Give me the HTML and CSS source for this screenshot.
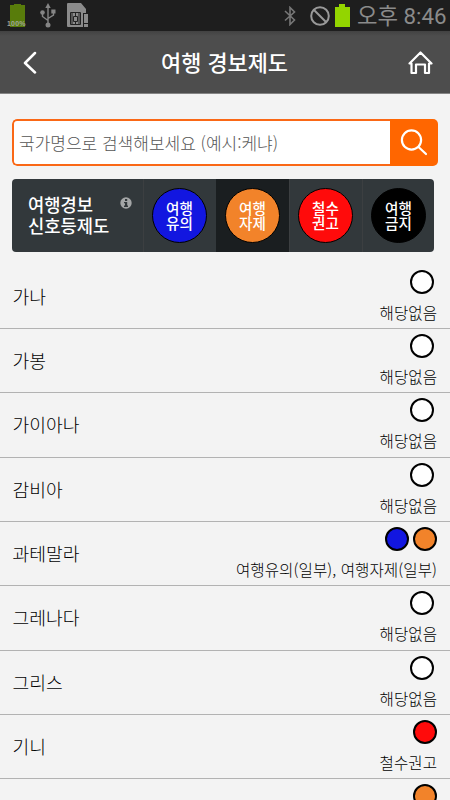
FILE: index.html
```html
<!DOCTYPE html>
<html lang="ko">
<head>
<meta charset="utf-8">
<title>여행 경보제도</title>
<link rel="stylesheet" href="styles.css">
</head>
<body>
<div class="statusbar">
  <div class="battery-full"><svg width="18" height="24" viewBox="0 0 18 24"><path fill="#587c0b" d="M1 2h4V1h7v1h4v22H1z"/></svg><span class="percent">100%</span></div>
  <svg class="usb" width="16" height="25" viewBox="0 0 16 25" fill="none" stroke="#858585" stroke-width="1.4"><path d="M8 3v18M2.500 9v4.500L8 17.500M13.500 7v5L8 15.500"/><g fill="#858585" stroke="none"><path d="M8 0l2.700 5H5.300zM11.300 6.500h4.200v4h-4.200z"/><circle cx="2.500" cy="9.500" r="2.300"/><circle cx="8" cy="22" r="2.500"/></g></svg>
  <svg class="sim" width="22" height="25" viewBox="0 0 22 25"><path fill="#8b8b8b" d="M1 0h13l5 6v4h-3v14H1q-1 0-1-1V1q0-1 1-1zM17 11h4v9h-4zM17 21h4v3h-4z"/><path fill="none" stroke="#222" d="M3.500 9.500h10v12h-10zM6.500 13.500h4v5h-4zM5 10v11M12 10v11M8.500 10v3M8.500 18v3"/></svg>
  <div class="spacer"></div>
  <svg class="bluetooth" width="12" height="20" viewBox="0 0 12 20" fill="none" stroke="#777" stroke-width="1.600"><path d="M1 5l9.500 9L6 18.500v-17L10.500 6 1 14.500"/></svg>
  <svg class="blocked" width="20" height="20" viewBox="0 0 20 20" fill="none" stroke="#999" stroke-width="2"><circle cx="10" cy="10" r="8.800"/><path d="M4 4l12 12"/></svg>
  <svg class="battery" width="15" height="23" viewBox="0 0 15 23"><path fill="#93d500" d="M0 3h4V0h6v3h5v20H0z"/></svg>
  <span class="clock">오후 8:46</span>
</div>
<header class="header">
  <svg class="back" width="14" height="24" viewBox="0 0 14 24" fill="none" stroke="#fff" stroke-width="2.500" stroke-linecap="round" stroke-linejoin="round"><path d="M12 3L2 13l10 9.500"/></svg>
  <h1 class="title">여행 경보제도</h1>
  <svg class="home" width="26" height="26" viewBox="0 0 26 26" fill="none" stroke="#fff" stroke-width="2.200" stroke-linecap="round" stroke-linejoin="round"><path d="M4.500 14.500H2.500L13.500 3.500l11 11h-2.500v9.500h-4v-8.500H9v8.500H4.500z"/></svg>
</header>
<main>
  <form class="search">
    <div class="field">국가명으로 검색해보세요 (예시:케냐)</div>
    <div class="submit"><svg width="28" height="28" viewBox="0 0 28 28" fill="none" stroke="#fff" stroke-width="2.200" stroke-linecap="round"><circle cx="11.500" cy="11" r="9.600"/><path d="M18.500 18l7.500 7"/></svg></div>
  </form>
  <section class="legend">
    <div class="label"><span>여행경보<br>신호등제도</span><svg class="info" width="12" height="12" viewBox="0 0 12 12"><circle cx="6" cy="6" r="5.700" fill="#a4a6a7"/><path fill="#32383b" d="M5 2h2.200v2H5zM4 5h3.200v3.500H8V10H4V8.500h1V6.300H4z"/></svg></div>
    <div class="level"><div class="disc blue">여행<br>유의</div></div>
    <div class="level active"><div class="disc orange">여행<br>자제</div></div>
    <div class="level"><div class="disc red">철수<br>권고</div></div>
    <div class="level last"><div class="disc black">여행<br>금지</div></div>
  </section>
  <ul class="list">
    <li class="row"><span class="country">가나</span><div class="state"><div class="dots none"><i class="dot"></i></div><span>해당없음</span></div></li>
    <li class="row"><span class="country">가봉</span><div class="state"><div class="dots none"><i class="dot"></i></div><span>해당없음</span></div></li>
    <li class="row"><span class="country">가이아나</span><div class="state"><div class="dots none"><i class="dot"></i></div><span>해당없음</span></div></li>
    <li class="row"><span class="country">감비아</span><div class="state"><div class="dots none"><i class="dot"></i></div><span>해당없음</span></div></li>
    <li class="row"><span class="country">과테말라</span><div class="state"><div class="dots"><i class="dot blue"></i><i class="dot orange"></i></div><span class="wide">여행유의(일부), 여행자제(일부)</span></div></li>
    <li class="row"><span class="country">그레나다</span><div class="state"><div class="dots none"><i class="dot"></i></div><span>해당없음</span></div></li>
    <li class="row"><span class="country">그리스</span><div class="state"><div class="dots none"><i class="dot"></i></div><span>해당없음</span></div></li>
    <li class="row"><span class="country">기니</span><div class="state"><div class="dots"><i class="dot red"></i></div><span>철수권고</span></div></li>
    <li class="row"><span class="country"></span><div class="state"><div class="dots"><i class="dot orange"></i></div></div></li>
  </ul>
</main>
</body>
</html>
```
FILE: styles.css
```css
* { box-sizing: border-box; }
html { height: 800px; overflow: hidden; }
body {
  display: flex;
  flex-direction: column;
  margin: 0;
  width: 450px;
  height: 800px;
  overflow: hidden;
  background: #f3f3f3;
  color: #000;
  font-family: "Noto Sans CJK KR", sans-serif;
}
svg { display: block; flex: none; }
.statusbar {
  display: flex;
  flex: none;
  align-items: flex-start;
  height: 31px;
  padding: 3px 5px 0 9px;
  background: #1e1e1e;
}
.battery-full { position: relative; width: 18px; }
.percent {
  position: absolute;
  left: -2px;
  top: 17px;
  font: bold 7px/8px "Liberation Sans", sans-serif;
  letter-spacing: .2px;
  color: #a0a59a;
}
.usb { margin-left: 13px; }
.sim { margin-left: 11px; }
.spacer { flex: 1; }
.bluetooth { margin: 3px 14px 0 0; }
.blocked { margin: 3px 5px 0 0; }
.battery { margin: 1px 7px 0 0; }
.clock {
  width: 88px;
  font: 22.300px/26px Roboto, "Noto Sans CJK KR", sans-serif;
  color: #8b8b8b;
  white-space: nowrap;
}
.header {
  display: flex;
  flex: none;
  align-items: center;
  justify-content: space-between;
  height: 63px;
  padding: 0 17px 0 23px;
  background: linear-gradient(#424242, #4d4d4d 5px);
  border-bottom: 1px solid #858585;
}
.title {
  margin: 0 0 0 5px;
  font-size: 21.900px;
  line-height: 30px;
  font-weight: 500;
  color: #fff;
}
main { flex: 1; min-height: 0; overflow: hidden; padding-top: 25px; }
.search {
  display: flex;
  height: 47px;
  margin: 0 12px 13px;
  border-radius: 5px;
  overflow: hidden;
}
.field {
  flex: 1;
  border: 2px solid #fa6816;
  border-right: 0;
  border-radius: 5px 0 0 5px;
  background: #fff;
  padding-left: 5px;
  font-size: 17px;
  font-weight: 300;
  line-height: 43px;
  color: #555;
  white-space: nowrap;
}
.submit {
  width: 48px;
  padding: 10px;
  background: #ff6600;
}
.legend {
  display: flex;
  width: 422px;
  height: 73px;
  margin-left: 12px;
  border-radius: 4px;
  overflow: hidden;
  background: #32383b;
  color: #fff;
}
.label {
  display: flex;
  justify-content: space-between;
  width: 131px;
  padding: 15px 11px 0 16px;
  font-size: 17.700px;
  line-height: 21px;
  font-weight: 500;
  white-space: nowrap;
}
.label span { width: 84px; }
.info { margin-top: 3px; }
.level {
  width: 73px;
  padding: 9px 0 0 8px;
  border-left: 1px solid #3c3f41;
}
.level.active { background: #1a1e20; border-color: #1a1e20; }
.level.last { width: 72px; }
.disc {
  width: 55px;
  height: 55px;
  padding-top: 11px;
  border: 1.500px solid #000;
  border-radius: 50%;
  font-size: 14.600px;
  line-height: 15px;
  font-weight: 500;
  text-align: center;
}
.blue { background: #1216e0; }
.orange { background: #f2832a; }
.red { background: #ff0b0b; }
.black { background: #000; }
.list { margin: 12.600px 0 0; padding: 0; list-style: none; }
.row {
  display: flex;
  justify-content: space-between;
  height: 64.350px;
  padding: 5px 13px 0 12.500px;
  border-bottom: 1px solid #b2b2b2;
  font-weight: 300;
}
.country { padding-top: 13px; font-size: 18.200px; line-height: 26px; }
.state {
  display: flex;
  flex-direction: column;
  align-items: flex-end;
  font-size: 15.600px;
  line-height: 22px;
}
.state span { margin-top: 7px; }
.state .wide { letter-spacing: .06px; }
.dots { display: flex; gap: 4px; }
.dots.none { margin-right: 3px; }
.dot {
  width: 24px;
  height: 24px;
  border: 2px solid #000;
  border-radius: 50%;
}
.none .dot { background: #fff; }
```
